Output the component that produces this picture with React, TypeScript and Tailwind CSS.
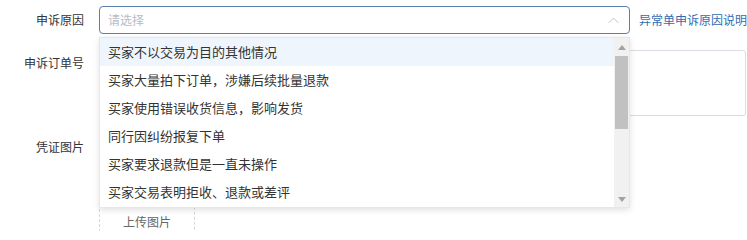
const reasons = [
  "买家不以交易为目的其他情况",
  "买家大量拍下订单，涉嫌后续批量退款",
  "买家使用错误收货信息，影响发货",
  "同行因纠纷报复下单",
  "买家要求退款但是一直未操作",
  "买家交易表明拒收、退款或差评",
];

const App = () => {
  return (
    <div
      className="relative w-[747px] h-[231px] overflow-hidden bg-white text-[#333]"
      style={{ fontFamily: '"Noto Sans CJK SC", "Noto Sans", sans-serif' }}
    >
      {/* Form */}
      <div className="flex flex-col pt-[6px]">
        {/* 申诉原因 */}
        <div className="flex items-center">
          <div className="w-[84px] text-right text-[12px] leading-[20px]">申诉原因</div>
          <div className="ml-[15px] w-[531px] h-[28px] border border-[#5a80b0] rounded-[4px] flex items-center justify-between pl-[8px] pr-[10px]">
            <span className="text-[12px] text-[#b8bcc4]">请选择</span>
            <svg width="11" height="7" viewBox="0 0 11 7" fill="none">
              <polyline points="0.5,6 5.5,1 10.5,6" stroke="#c0c4cc" strokeWidth="1" />
            </svg>
          </div>
          <a className="ml-[9px] text-[12px] text-[#2f6cb3] whitespace-nowrap">异常单申诉原因说明</a>
        </div>

        {/* 申诉订单号 */}
        <div className="flex items-start mt-[16px]">
          <div className="w-[84px] text-right text-[12px] leading-[20px] pt-[3px]">申诉订单号</div>
          <div className="ml-[15px] w-[647px] h-[66px] border border-[#d9dce2] rounded-[3px]" />
        </div>

        {/* 凭证图片 */}
        <div className="flex items-start mt-[17px]">
          <div className="w-[84px] text-right text-[12px] leading-[20px] pt-[4px]">凭证图片</div>
          <div className="ml-[15px] w-[96px] h-[110px] border border-dashed border-[#d4d7dd] rounded-[3px] flex flex-col items-center pt-[78px]">
            <span className="text-[12px] leading-[20px] text-[#666]">上传图片</span>
          </div>
        </div>
      </div>

      {/* Dropdown */}
      <div className="absolute left-[99px] top-[37px] w-[531px] h-[171px] bg-white border border-[#e4e7ed] shadow-[0_2px_6px_rgba(0,0,0,0.12)] flex">
        <ul className="flex-1 flex flex-col">
          {reasons.map((r, i) => (
            <li
              key={r}
              className={
                i === 0
                  ? "h-[28px] flex items-center pl-[8px] text-[13px] bg-[#eff5fc]"
                  : "h-[28px] flex items-center pl-[8px] text-[13px]"
              }
            >
              {r}
            </li>
          ))}
        </ul>
        {/* scrollbar */}
        <div className="w-[15px] bg-[#f1f1f1] flex flex-col items-center">
          <div className="h-[18px] flex items-center justify-center">
            <svg width="8" height="5" viewBox="0 0 8 5">
              <polygon points="0,5 4,0 8,5" fill="#a3a3a3" />
            </svg>
          </div>
          <div className="w-[13px] h-[73px] bg-[#c1c1c1]" />
          <div className="flex-1" />
          <div className="h-[16px] flex items-center justify-center">
            <svg width="8" height="5" viewBox="0 0 8 5">
              <polygon points="0,0 8,0 4,5" fill="#a3a3a3" />
            </svg>
          </div>
        </div>
      </div>
    </div>
  );
};

export default App;
